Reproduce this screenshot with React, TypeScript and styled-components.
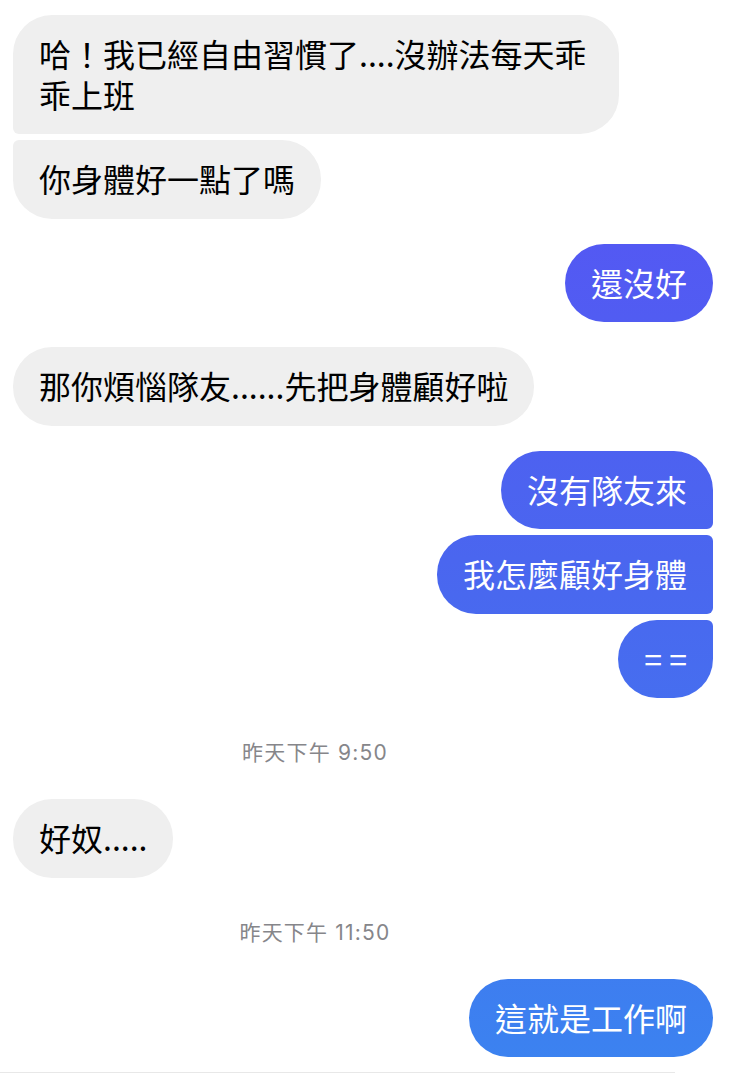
import React from "react";
import styled, { createGlobalStyle, css } from "styled-components";

const GlobalStyle = createGlobalStyle`
  html, body {
    margin: 0;
    padding: 0;
    background: #ffffff;
  }
  body {
    font-family: "Noto Sans CJK TC", "Noto Sans", sans-serif;
    -webkit-font-smoothing: antialiased;
  }
`;

const Page = styled.div`
  width: 729px;
  min-height: 1076px;
  background: #ffffff;
  display: flex;
  flex-direction: column;
`;

const Thread = styled.div`
  display: flex;
  flex-direction: column;
  gap: 25px;
  padding: 15px 16px 15px 13px;
`;

type Side = "left" | "right";
type Pos = "single" | "first" | "middle" | "last";

const Group = styled.div<{ $side: Side }>`
  display: flex;
  flex-direction: column;
  gap: 6px;
  align-items: ${(p) => (p.$side === "left" ? "flex-start" : "flex-end")};
`;

const BIG = 39;
const SMALL = 6;

const radius = (side: Side, pos: Pos) => {
  // order: TL TR BR BL
  if (pos === "single") return `${BIG}px`;
  const top = pos === "first" ? BIG : SMALL;
  const bottom = pos === "last" ? BIG : SMALL;
  if (side === "left") return `${top}px ${BIG}px ${BIG}px ${bottom}px`;
  return `${BIG}px ${top}px ${bottom}px ${BIG}px`;
};

const Bubble = styled.div<{ $side: Side; $pos: Pos }>`
  max-width: 606px;
  box-sizing: border-box;
  padding: 18px 26px 20px;
  font-size: 32px;
  line-height: 40.5px;
  font-weight: 400;
  border-radius: ${(p) => radius(p.$side, p.$pos)};
  word-break: break-all;
  ${(p) =>
    p.$side === "left"
      ? css`
          background: #efefef;
          color: #000000;
        `
      : css`
          color: #ffffff;
          background: linear-gradient(180deg, #5a4ff6 0px, #4a66ef 560px, #3b83f0 1076px);
          background-attachment: fixed;
        `}
`;

const Stamp = styled.div`
  margin: 18px 0 9px;
  padding-right: 96px;
  text-align: center;
  font-family: "Inter", "Noto Sans CJK TC", sans-serif;
  font-size: 21px;
  line-height: 24px;
  color: #86868a;
  letter-spacing: 1.2px;
`;

const Divider = styled.div`
  margin-right: 54px;
  border-top: 1px solid #e8e8e8;
`;

type Msg = { text: string };
type Block =
  | { kind: "group"; side: Side; msgs: Msg[] }
  | { kind: "stamp"; text: string };

const blocks: Block[] = [
  {
    kind: "group",
    side: "left",
    msgs: [
      { text: "哈！我已經自由習慣了....沒辦法每天乖乖上班" },
      { text: "你身體好一點了嗎" },
    ],
  },
  { kind: "group", side: "right", msgs: [{ text: "還沒好" }] },
  { kind: "group", side: "left", msgs: [{ text: "那你煩惱隊友......先把身體顧好啦" }] },
  {
    kind: "group",
    side: "right",
    msgs: [{ text: "沒有隊友來" }, { text: "我怎麼顧好身體" }, { text: "= =" }],
  },
  { kind: "stamp", text: "昨天下午 9:50" },
  { kind: "group", side: "left", msgs: [{ text: "好奴....." }] },
  { kind: "stamp", text: "昨天下午 11:50" },
  { kind: "group", side: "right", msgs: [{ text: "這就是工作啊" }] },
];

const posOf = (i: number, n: number): Pos => {
  if (n === 1) return "single";
  if (i === 0) return "first";
  if (i === n - 1) return "last";
  return "middle";
};

export default function App() {
  return (
    <Page>
      <GlobalStyle />
      <Thread>
        {blocks.map((b, bi) =>
          b.kind === "stamp" ? (
            <Stamp key={bi}>{b.text}</Stamp>
          ) : (
            <Group key={bi} $side={b.side}>
              {b.msgs.map((m, mi) => (
                <Bubble key={mi} $side={b.side} $pos={posOf(mi, b.msgs.length)}>
                  {m.text}
                </Bubble>
              ))}
            </Group>
          )
        )}
      </Thread>
      <Divider />
    </Page>
  );
}
